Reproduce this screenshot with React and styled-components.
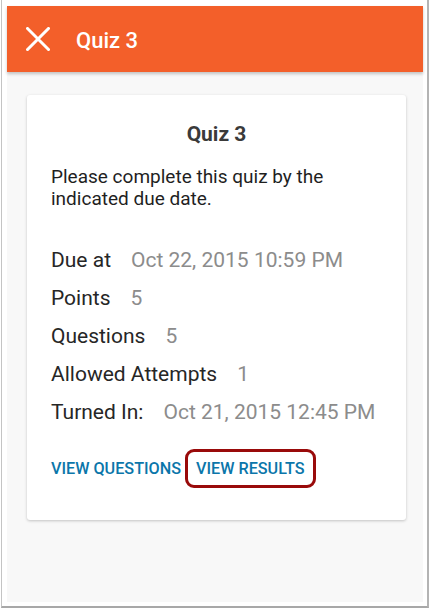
import React from 'react';
import styled, { createGlobalStyle } from 'styled-components';

const GlobalStyle = createGlobalStyle`
  html, body {
    margin: 0;
    padding: 0;
    background: #ffffff;
  }
  body {
    font-family: Roboto, "Liberation Sans", Arial, sans-serif;
  }
`;

const Frame = styled.div`
  box-sizing: border-box;
  width: 428px;
  height: 608px;
  margin-left: 1px;
  padding: 6px 4px 4px 5px;
  border-left: 1px solid #c4c4c4;
  border-right: 2px solid #b4b4b4;
  border-bottom: 2px solid #a8a8a8;
  background: #ffffff;
`;

const Screen = styled.div`
  height: 596px;
  background: #f8f8f8;
  display: flex;
  flex-direction: column;
`;

const Toolbar = styled.header`
  height: 66px;
  flex-shrink: 0;
  background: #f35f2a;
  display: flex;
  align-items: center;
  padding-left: 19px;
  box-shadow: 0 2px 3px rgba(0, 0, 0, 0.22);
  position: relative;
  z-index: 1;
`;

const CloseButton = styled.button`
  width: 24px;
  height: 24px;
  padding: 0;
  border: 0;
  background: none;
  display: flex;
`;

const ToolbarTitle = styled.h1`
  margin: 0 0 0 26px;
  padding-top: 2px;
  font-size: 22px;
  font-weight: 500;
  color: #ffffff;
`;

const Card = styled.section`
  margin: 23px 17px 0 20px;
  height: 425px;
  box-sizing: border-box;
  padding: 25px 24px 0 24px;
  background: #ffffff;
  border-radius: 3px;
  box-shadow: 0 1px 3px rgba(0, 0, 0, 0.22);
`;

const CardTitle = styled.h2`
  margin: 0;
  text-align: center;
  font-size: 21px;
  line-height: 28px;
  font-weight: 700;
  color: #3a3a3a;
`;

const Description = styled.p`
  margin: 18px 0 0;
  font-size: 19px;
  line-height: 22px;
  color: #1f1f1f;
`;

const Details = styled.dl`
  margin: 31px 0 0;
`;

const DetailRow = styled.div`
  display: flex;
  align-items: baseline;
  gap: 20px;
  font-size: 21px;
  line-height: 38px;
`;

const Label = styled.dt`
  color: #262626;
`;

const Value = styled.dd`
  margin: 0;
  color: #8c8c8c;
`;

const Actions = styled.div`
  margin-top: 18px;
  display: flex;
  align-items: center;
  gap: 4px;
`;

const ActionLink = styled.a`
  box-sizing: border-box;
  height: 39px;
  display: flex;
  align-items: center;
  font-size: 16.2px;
  font-weight: 500;
  color: #0b76aa;
  text-decoration: none;
  border-radius: 9px;
  padding: ${p => (p.$highlighted ? '0 8px 0 8px' : '0')};
  border: ${p => (p.$highlighted ? '3px solid #990a0a' : '0')};
`;

const details = [
  { label: 'Due at', value: 'Oct 22, 2015 10:59 PM' },
  { label: 'Points', value: '5' },
  { label: 'Questions', value: '5' },
  { label: 'Allowed Attempts', value: '1' },
  { label: 'Turned In:', value: 'Oct 21, 2015 12:45 PM' },
];

function CloseIcon() {
  return (
    <svg width="24" height="24" viewBox="0 0 24 24">
      <path d="M1.5 1.5 L22.5 22.5 M22.5 1.5 L1.5 22.5" stroke="#ffffff" strokeWidth="3" strokeLinecap="square" />
    </svg>
  );
}

export default function App() {
  return (
    <>
      <GlobalStyle />
      <Frame>
        <Screen>
          <Toolbar>
            <CloseButton aria-label="Close">
              <CloseIcon />
            </CloseButton>
            <ToolbarTitle>Quiz 3</ToolbarTitle>
          </Toolbar>

          <Card>
            <CardTitle>Quiz 3</CardTitle>
            <Description>
              Please complete this quiz by the indicated due date.
            </Description>
            <Details>
              {details.map(d => (
                <DetailRow key={d.label}>
                  <Label>{d.label}</Label>
                  <Value>{d.value}</Value>
                </DetailRow>
              ))}
            </Details>
            <Actions>
              <ActionLink href="#">VIEW QUESTIONS</ActionLink>
              <ActionLink href="#" $highlighted>VIEW RESULTS</ActionLink>
            </Actions>
          </Card>
        </Screen>
      </Frame>
    </>
  );
}
